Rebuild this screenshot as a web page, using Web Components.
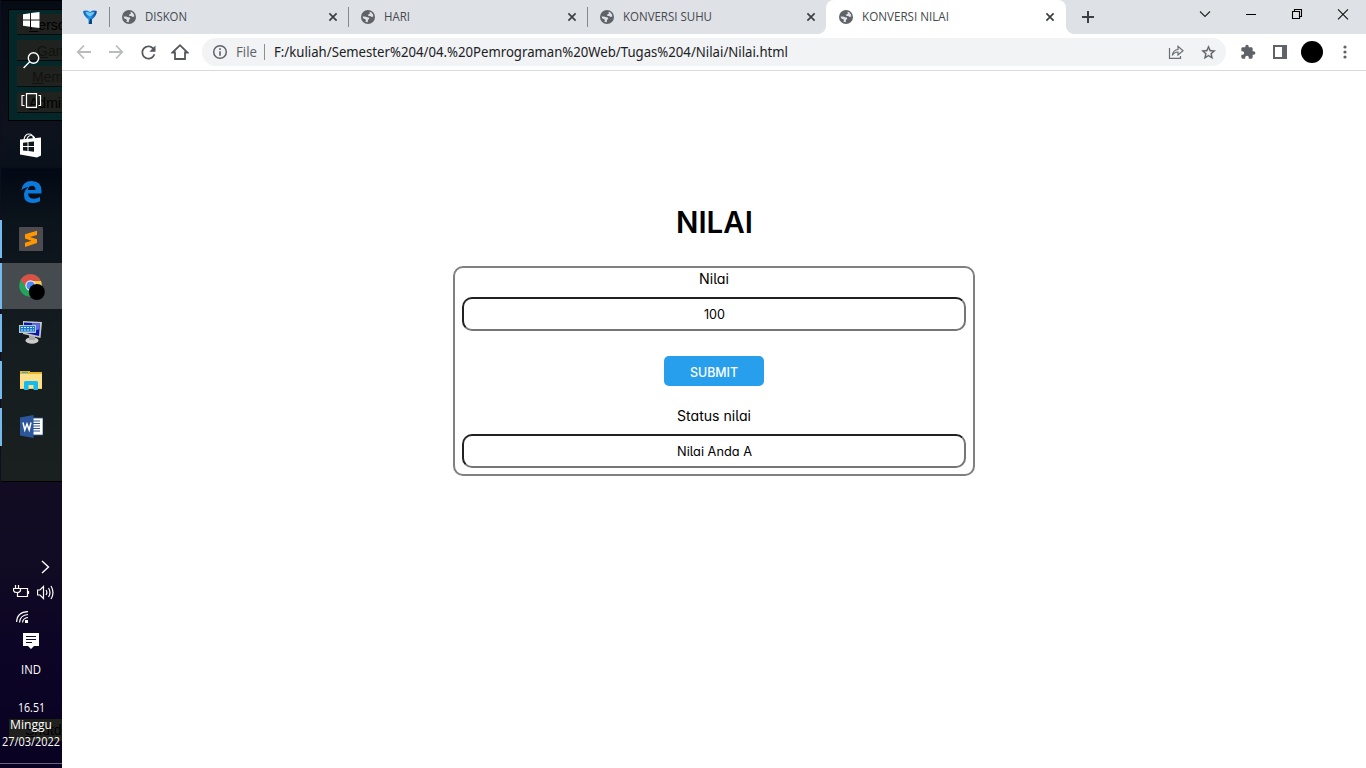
<!DOCTYPE html>
<html lang="id">
<head>
<meta charset="utf-8">
<title>KONVERSI NILAI</title>
<style>
html,body{margin:0;height:100%;overflow:hidden;background:#fff}
body{font-family:"Open Sans","Noto Sans",sans-serif;font-size:12px}
</style>
</head>
<body>
<desktop-shell></desktop-shell>
<script>
const define = (name, html, setup) => customElements.define(name, class extends HTMLElement {
  connectedCallback() {
    if (this.shadowRoot) return;
    this.attachShadow({ mode: 'open' }).innerHTML = typeof html === 'function' ? html(this) : html;
    if (setup) setup(this);
  }
});

/* Text run condensed or widened to a given pixel width. */
define('fit-text', `<style>:host{display:inline-block;white-space:nowrap}span{display:inline-block;transform-origin:0 50%}</style><span><slot></slot></span>`, el => {
  const w = +el.getAttribute('w'), s = el.shadowRoot.querySelector('span');
  const n = s.getBoundingClientRect().width;
  el.style.width = w + 'px';
  if (n) s.style.transform = `scaleX(${w / n})`;
});

const globe = `<svg width="14" height="14" viewBox="0 0 14 14"><circle cx="7" cy="7" r="7" fill="#5f6368"/><path d="M8.600 1.700 10.200 2.300 12 4.400 12.300 6.600 10.500 6.900 9.200 6 7.300 5.900 7.200 4.500 8.800 3.800ZM1.600 6.400 4 6.500 6.200 7.300 7.800 7.600 8.300 8.900 7 9.800 6.800 12.300A5.500 5.500 0 0 1 4.200 11.600L5 10.200 4 9 2.200 8.500Z" fill="#dee1e6"/></svg>`;

define('browser-tab', el => `<style>
:host{display:flex;width:239px;height:34px;align-items:center;box-sizing:border-box;position:relative;color:#45494d;font-size:12px}
:host([active]){width:240px;background:#fff;border-radius:8px 8px 0 0}
.sep{width:1px;height:20px;background:#85888c;margin-right:12px}
:host([active]) .sep{background:none;margin-left:-1px;margin-right:13px}
.t{margin-left:9px;flex:1;line-height:16px}
.x{margin-right:10px}
:host([active]) .x{margin-right:11px}
svg{display:block;flex:none}
.f{display:none;position:absolute;bottom:0;width:8px;height:8px}
:host([active]) .f{display:block}
.l{left:-8px;background:radial-gradient(circle at 0 0,transparent 7.5px,#fff 8.2px)}
.r{right:-8px;background:radial-gradient(circle at 100% 0,transparent 7.5px,#fff 8.2px)}
</style><i class="f l"></i><i class="f r"></i><span class="sep"></span>${globe}<span class="t"><fit-text w="${el.getAttribute('w')}">${el.getAttribute('label')}</fit-text></span>
<svg class="x" width="10" height="10" viewBox="0 0 10 10"><path d="M1.400 1.400 8.600 8.600M8.600 1.400 1.400 8.600" stroke="#3c4043" stroke-width="1.700"/></svg>`);

define('tab-strip', `<style>
:host{display:flex;height:34px;background:#dee1e6}
.pin{width:47px;display:flex;align-items:center;justify-content:flex-end;box-sizing:border-box;padding-right:12px}
.plus{width:44px;display:grid;place-items:center}
.gap{flex:1}
.win{display:flex;height:28px}
.win svg{display:block;width:46px;height:28px}
svg{display:block}
</style>
<div class="pin"><svg width="14" height="15" viewBox="0 0 14 15"><defs><linearGradient id="g"><stop offset="0" stop-color="#0a5fb4"/><stop offset=".5" stop-color="#1e9af0"/><stop offset="1" stop-color="#06408c"/></linearGradient></defs><path d="M.3 1Q4 -.3 7 2 10 -.3 13.700 1 14.300 5 8.900 9.500V14H5.500V9.500Q-.3 5 .3 1Z" fill="url(#g)"/><path d="M2.500 2Q5 1.500 7 3.200 9 1.500 11.500 2 11 4.500 7 6.500 3 4.500 2.500 2Z" fill="#a6e6ff" opacity=".65"/><path d="M7 8.500 8.900 9.500V14H6Z" fill="#072958" opacity=".8"/></svg></div>
<browser-tab label="DISKON" w="42"></browser-tab><browser-tab label="HARI" w="26"></browser-tab><browser-tab label="KONVERSI SUHU" w="89"></browser-tab><browser-tab active label="KONVERSI NILAI" w="87"></browser-tab>
<div class="plus"><svg width="12" height="12"><path d="M6 0V12M0 6H12" stroke="#3c4043" stroke-width="2"/></svg></div>
<div class="gap"></div>
<div class="win">
<svg viewBox="0 0 46 28"><path d="M18 11.500 23 16.500 28 11.500" fill="none" stroke="#222" stroke-width="1.100"/></svg>
<svg viewBox="0 0 46 28"><path d="M18 14.500H28" stroke="#000"/></svg>
<svg viewBox="0 0 46 28"><path d="M18.500 11.500H25.500V18.500H18.500ZM20.500 11V9.500H27.500V16.500H26" fill="none" stroke="#000" stroke-width="1.100"/></svg>
<svg viewBox="0 0 46 28"><path d="M18 9.300 28 19.300M28 9.300 18 19.300" stroke="#111" stroke-width="1.100"/></svg>
</div>`);

define('tool-bar', `<style>
:host{display:flex;height:36px;background:#fff;border-bottom:1px solid #d8d9db;align-items:center;padding-left:6px;padding-right:6px}
svg{display:block;flex:none}
.b{width:32px;height:32px;display:grid;place-items:center;flex:none}
.omni{flex:1;margin-left:6px;margin-right:6px;height:28px;border-radius:14px;background:#f1f3f4;display:flex;align-items:center;padding-left:10px;padding-right:2px;font-size:13.800px;color:#202124;line-height:20px}
.file{color:#5f6368;margin-left:8px}
.sep{width:1px;height:16px;background:#8b8e92;margin:0 9px 0 7px}
.url{flex:1;font-family:"Noto Sans",sans-serif}
</style>
<div class="b"><svg width="16" height="16" viewBox="0 0 16 16" fill="none" stroke="#b9bbbd" stroke-width="1.800"><path d="M15 8H2M8 1.500 1.800 8 8 14.500"/></svg></div>
<div class="b"><svg width="16" height="16" viewBox="0 0 16 16" fill="none" stroke="#b9bbbd" stroke-width="1.800"><path d="M1 8H14M8 1.500 14.200 8 8 14.500"/></svg></div>
<div class="b"><svg width="21" height="21" viewBox="0 0 24 24" fill="#55595d"><path d="M17.650 6.350C16.200 4.900 14.210 4 12 4c-4.420 0-7.990 3.580-7.990 8s3.570 8 7.990 8c3.730 0 6.840-2.550 7.730-6h-2.080c-.82 2.330-3.040 4-5.650 4-3.310 0-6-2.690-6-6s2.690-6 6-6c1.660 0 3.140.69 4.220 1.780L13 11h7V4l-2.350 2.350z"/></svg></div>
<div class="b"><svg width="18" height="18" viewBox="0 0 18 18" fill="none" stroke="#55595d" stroke-width="1.800"><path d="M1.500 9.500 9 2.200 16.500 9.500H14V16H4V9.500Z"/></svg></div>
<div class="omni"><svg width="16" height="16" viewBox="0 0 16 16"><circle cx="8" cy="8" r="6.300" fill="none" stroke="#5f6368" stroke-width="1.500"/><path d="M8 4.300V6M8 7.200V11.800" stroke="#5f6368" stroke-width="1.600"/></svg>
<fit-text class="file" w="21">File</fit-text><span class="sep"></span><span class="url"><fit-text w="514">F:/kuliah/Semester%204/04.%20Pemrograman%20Web/Tugas%204/Nilai/Nilai.html</fit-text></span>
<div class="b"><svg width="16" height="16" viewBox="0 0 16 16" fill="none" stroke="#696d71" stroke-width="1.200"><path d="M1.500 4V14.400H12.500V12M4.300 11.500Q5 6 10 5.500V2.300L15 6.800 10 11V8Q6 8 4.300 11.500Z"/></svg></div>
<div class="b"><svg width="17" height="17" viewBox="0 0 24 24" fill="#5f6368" stroke="#5f6368" stroke-width=".4"><path d="M22 9.240l-7.190-.62L12 2 9.190 8.630 2 9.240l5.460 4.730L5.820 21 12 17.270 18.180 21l-1.630-7.030L22 9.240zM12 15.400l-3.760 2.270 1-4.280-3.320-2.880 4.380-.38L12 6.100l1.710 4.040 4.380.38-3.320 2.880 1 4.280L12 15.400z"/></svg></div></div>
<div class="b"><svg width="16" height="16" viewBox="0 0 24 24" fill="#5f6368"><path d="M20.500 11H19V7c0-1.100-.9-2-2-2h-4V3.500C13 2.120 11.880 1 10.500 1S8 2.120 8 3.500V5H4c-1.100 0-1.990.9-1.990 2v3.800H3.500c1.490 0 2.700 1.210 2.700 2.700s-1.210 2.700-2.700 2.700H2V20c0 1.100.9 2 2 2h3.800v-1.500c0-1.490 1.210-2.700 2.700-2.700 1.490 0 2.700 1.210 2.700 2.700V22H17c1.100 0 2-.9 2-2v-4h1.500c1.380 0 2.500-1.120 2.500-2.500S21.880 11 20.500 11z"/></svg></div>
<div class="b"><svg width="14" height="14"><path d="M0 0H14V14H0ZM2 2V12H9V2Z" fill="#5f6368" fill-rule="evenodd"/></svg></div>
<div class="b"><svg width="22" height="22"><circle cx="11" cy="11" r="11" fill="#000"/></svg></div>
<div class="b"><svg width="4" height="14" fill="#5f6368" style="margin-left:1px"><circle cx="2" cy="2" r="1.600"/><circle cx="2" cy="7" r="1.600"/><circle cx="2" cy="12" r="1.600"/></svg></div>`);

/* Label above a read-out field. */
define('value-field', el => `<style>
:host{display:block;color:#000}
.l{height:20px;line-height:21px;font-size:14px;display:flex;justify-content:center}
.i{margin-top:9px;height:34px;box-sizing:border-box;border:2px inset #767676;border-radius:10px;display:flex;justify-content:center;align-items:center;font-size:12.500px;padding-top:1px}
</style><div class="l"><fit-text w="${el.getAttribute('lw')}">${el.getAttribute('label')}</fit-text></div><div class="i"><fit-text w="${el.getAttribute('w')}">${el.getAttribute('value')}</fit-text></div>`);

define('grade-form', `<style>
:host{display:flex;flex-direction:column;align-items:center;flex:1;padding-top:130px;font-family:Inter,Lato,sans-serif;font-feature-settings:"cv11","cv05"}
h1{margin:0;height:40px;line-height:42px;font-size:30px;font-weight:600;color:#000}
.card{margin-top:25px;box-sizing:border-box;width:522px;height:210px;border:2px solid #808080;border-radius:10px;padding:0 7px;display:flex;flex-direction:column;align-items:center}
value-field{width:504px}
button{display:block;width:100px;height:30px;margin:25px 0 19px;padding:1px 0 0;border:0;border-radius:5px;background:#289fed;color:#fff;font:500 13px Inter,sans-serif}
</style><h1><fit-text w="77">NILAI</fit-text></h1>
<div class="card"><value-field label="Nilai" lw="30" value="100" w="21"></value-field>
<button><fit-text w="48">SUBMIT</fit-text></button>
<value-field label="Status nilai" lw="74" value="Nilai Anda A" w="75"></value-field></div>`);

define('task-button', `<style>
:host{display:grid;place-items:center;height:46px;position:relative;width:62px}
:host([small]){height:40px}
:host([open])::before{content:"";position:absolute;left:0;top:4px;width:2px;height:38px;background:#76b9ed}
:host([active]){background:#454b4e}
:host([active])::before{content:"";position:absolute;left:0;top:0;width:2px;height:46px;background:#76b9ed}
</style><slot></slot>`);

define('tray-area', `<style>
:host{display:flex;flex-direction:column;align-items:center;color:#fff;font-size:12px;position:relative;height:209px;padding-bottom:4px;border-bottom:1px solid #686578;box-sizing:content-box}
svg{display:block}.row{display:flex;width:62px;box-sizing:border-box}
.t{height:17px;line-height:17px;font-size:12.200px}
</style>
<div class="row" style="padding:10px 0 0 41px;height:35px"><svg width="9" height="14"><path d="M1 1 7.500 7 1 13" fill="none" stroke="#fff" stroke-width="1.400"/></svg></div>
<div class="row" style="padding-left:13px;height:26px;gap:7px"><svg width="17" height="15" fill="none" stroke="#fff"><path d="M2.500 0V3M5.500 0V3M.5 3.500H7.500V5.500Q7 7.500 4 7.500 1 7.500 .5 5.500ZM4.500 8V11.500H14.500V3.500H8M15.500 6V9" stroke-width="1.200"/></svg><svg width="17" height="15" fill="none" stroke="#fff" stroke-width="1.200"><path d="M.5 5V10H3L6.500 13.500V1.500L3 5ZM9 5Q10.800 7.500 9 10M11.500 3Q14.500 7.500 11.500 12M14 1Q18 7.500 14 14"/></svg></div>
<div class="row" style="padding-left:16px;height:21px"><svg width="13" height="12" fill="none" stroke="#fff" stroke-width="1.200"><path d="M.6 11Q1 1 12 .7M3.500 11.500Q4 4 12 3.500M6.500 11.500Q7 7 12 6.500"/><rect x="9" y="9" width="3" height="3" fill="#fff" stroke="none"/></svg></div>
<svg width="16" height="16" style="margin-top:1px"><path d="M0 0H16V13H11L8 16 5 13H0Z" fill="#fff"/><path d="M3 3.500H13M3 6.500H13M3 9.500H9" stroke="#100b2a"/></svg>
<div class="t" style="margin-top:12px"><fit-text w="20">IND</fit-text></div>
<div class="t" style="margin-top:21px"><fit-text w="27">16.51</fit-text></div>
<div class="t"><fit-text w="42">Minggu</fit-text></div>
<div class="t"><fit-text w="58">27/03/2022</fit-text></div>`);

/* Dimmed window showing through the translucent taskbar. */
define('ghost-backdrop', `<style>
:host{position:absolute;inset:0;overflow:hidden;background:linear-gradient(#110c22 482px,#110b23 560px,#0d0525 640px,#0a0222);font:14px "Liberation Sans",sans-serif;color:#000}
.top{height:482px;margin-left:1px;background:linear-gradient(#050c16,#0d121d 130px,#0a111b 166px,#030914 168px,#0b131b 220px,#141c20 330px,#1a201f);border-bottom:1px solid #000;border-left:0;box-sizing:border-box;padding:8px 0 0 7px;border-top:1px solid #000}
.frame{height:112px;box-sizing:border-box;border:1px solid #000;border-right:0;background:#042729;padding:4px 0 0 8px;display:flex;flex-direction:column;gap:5px}
.k{height:21px;line-height:22px;box-sizing:border-box;background:#20221f;border-bottom:1px solid #080908;white-space:nowrap;overflow:hidden}
.dim{color:#11120f}
u{text-decoration-thickness:1px}
.shut{margin-top:236px;margin-left:8px;height:24px;line-height:23px;background:#20211f;border:1px solid #090714;border-right:0;box-sizing:border-box;padding-left:16px}
</style><div class="top"><div class="frame"><div class="k" style="padding-left:12px"><u>P</u>erso</div><div class="k dim" style="padding-left:20px"><u>G</u>am</div><div class="k dim" style="padding-left:15px"><u>M</u>em</div><div class="k" style="padding-left:12px"><u>A</u>dmin</div></div></div><div class="shut"><u>S</u>hutdo</div>`);

define('task-bar', `<style>
:host{display:flex;flex-direction:column;width:62px;height:768px;position:relative;overflow:hidden;flex:none}
.apps{position:relative;display:flex;flex-direction:column;gap:1px;margin-top:2px;flex:1}
.sys{position:relative}
svg{display:block}tray-area{flex:none}
</style><ghost-backdrop></ghost-backdrop>
<div class="sys">
<task-button small><svg width="17" height="16" viewBox="0 0 17 16" fill="#fff"><path d="M0 2.300 7 1.300V7.500H0ZM8 1.100 16.500 0V7.500H8ZM0 8.500H7V14.700L0 13.700ZM8 8.500H16.500V16L8 14.900Z"/></svg></task-button>
<task-button small><svg width="17" height="17" fill="none" stroke="#fff" stroke-width="1.400"><circle cx="10.500" cy="6" r="5.200"/><path d="M6.700 9.800 .6 16"/></svg></task-button>
<task-button small><svg width="21" height="15" fill="none" stroke="#fff" stroke-width="1.200"><path d="M5.500 .7H15.500V14.300H5.500ZM3.500 2.500H1V12.500H3.500M17.500 2.500H19.500V12.500H17.500"/></svg></task-button></div>
<div class="apps">
<task-button><svg width="22" height="25" viewBox="0 0 22 25"><path d="M0 6.500 21 4.500V22.500L17 24.500 0 21.500Z" fill="#fff"/><path d="M4 6.500Q5 1 9 1T13.500 6M7 6Q8 2.500 11 2.500T15 6" fill="none" stroke="#fff" stroke-width="1.200"/><path d="M3 9.700 7.500 9.200V13H3ZM8.500 9 14 8.500V13H8.500ZM3 14H7.500V18L3 17.500ZM8.500 14H14V18.800L8.500 18.100Z" fill="#10161e"/></svg></task-button>
<task-button><svg width="21" height="22" viewBox="0 0 21 22"><path d="M.2 9.500Q1.500 0 10.500 0 20.500 0 20.500 10V12.500H7Q7.500 17.800 13 17.800 16.500 17.800 19 16V20.200Q16 22 12 22 3 22 3 14 3 9 7.500 6.200 2.500 6.500 .2 9.500ZM7 9H14.500Q14.500 4.800 11 4.800 7.500 4.800 7 9Z" fill="#0a7bdc"/></svg></task-button>
<task-button open><svg width="24" height="24"><rect width="24" height="24" rx="1" fill="#4d4b4f"/><path d="M6 7.300 18 3.700V8L11 10 18 12.300V16L6 20V15.700L12.500 13.800 6 11.500Z" fill="#ff9800"/></svg></task-button>
<task-button active><svg width="26" height="26" viewBox="0 0 26 26" style="margin:2px 0 0 2px"><circle cx="11.500" cy="11.500" r="11.300" fill="#24a35d"/><path d="M1.700 5.800A11.300 11.300 0 0 1 21.800 7H11.500L7.500 14Z" fill="#dc5047"/><path d="M12 7H21.900A11.300 11.300 0 0 1 11.500 22.800L16 14Z" fill="#fbc64e"/><circle cx="11.500" cy="11.500" r="5.200" fill="#eee"/><circle cx="11.500" cy="11.500" r="4" fill="#4b8bf4"/><circle cx="17.800" cy="18" r="8" fill="#000"/></svg></task-button>
<task-button open><svg width="24" height="24" viewBox="0 0 24 24" style="margin-top:-2px"><ellipse cx="13" cy="20.500" rx="6.500" ry="3.300" fill="#ccc"/><path d="M10 14H16V20H10Z" fill="#aaa"/><path d="M4 1 23 2 21.500 18 4 14Z" fill="#c6c7c3"/><path d="M5 2.500 21 3.500 20 16 5 12.500Z" fill="#0717b5"/><path d="M13 3 21 3.500 20.500 9 13 12Z" fill="#5f6be5"/><rect y="5" width="17" height="8" fill="#b8c8d2"/><rect x="1" y="6" width="15" height="5.500" fill="#1978c6"/><path d="M2 7.500H15M2 10H15" stroke="#cce9ff" stroke-dasharray="2 1"/></svg></task-button>
<task-button open><svg width="22" height="19" viewBox="0 0 22 19"><path d="M0 0H10V1H22V18H0Z" fill="#e9b52d"/><path d="M0 3H22V17.500H0Z" fill="#fee08a"/><path d="M2 .8H8V2H2Z" fill="#39a9d9"/><path d="M4 19V11L5 10H17L18 11V19H13.500V14H8.500V19Z" fill="#15bbf0"/></svg></task-button>
<task-button open><svg width="23" height="23" viewBox="0 0 23 23" style="margin-top:-1px"><path d="M12 3H23V20H12Z" fill="#fff" stroke="#2b579a" stroke-width=".8"/><path d="M13 6H20M13 8.500H20M13 11H20M13 13.500H20M13 16H20" stroke="#2b579a" stroke-width="1.100"/><path d="M0 2.500 13.500 0V23L0 20.500Z" fill="#2b579a"/><path d="M3 7.500 4.800 15 7 9 9.200 15 11 7.500" fill="none" stroke="#fff" stroke-width="1.500"/></svg></task-button>
</div><tray-area></tray-area><div style="height:4px;flex:none"></div>`);

define('browser-window', `<style>:host{display:flex;flex-direction:column;flex:1;background:#fff;min-width:0}</style><tab-strip></tab-strip><tool-bar></tool-bar><grade-form></grade-form>`);
define('desktop-shell', `<style>:host{display:flex;width:1366px;height:768px;overflow:hidden}</style><task-bar></task-bar><browser-window></browser-window>`);
</script>
</body>
</html>
